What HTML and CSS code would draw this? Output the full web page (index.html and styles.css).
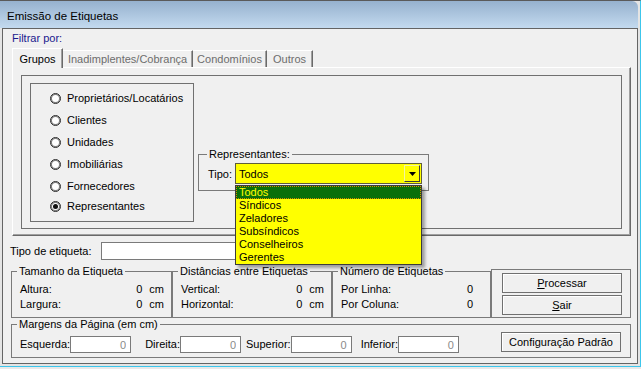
FILE: index.html
```
<!DOCTYPE html>
<html lang="pt-BR">
<head>
    <meta charset="UTF-8">
    <meta name="viewport" content="width=device-width, initial-scale=1.0">
    <title>Emissão de Etiquetas</title>
    <link rel="stylesheet" href="styles.css">
</head>
<body>
    <div class="window">
        <!-- Title Bar -->
        <div class="titlebar">Emissão de Etiquetas</div>

        <div class="client">
            <div class="filter-label">Filtrar por:</div>

            <!-- Tabs -->
            <div class="tabs">
                <div class="tab active tab-grupos">Grupos</div>
                <div class="tab tab-inad">Inadimplentes/Cobrança</div>
                <div class="tab tab-cond">Condomínios</div>
                <div class="tab tab-outros">Outros</div>
            </div>

            <div class="tab-panel">
                <div class="inner-box">
                    <div class="radio-box">
                        <label class="radio-item"><span class="radio"></span>Proprietários/Locatários</label>
                        <label class="radio-item"><span class="radio"></span>Clientes</label>
                        <label class="radio-item"><span class="radio"></span>Unidades</label>
                        <label class="radio-item"><span class="radio"></span>Imobiliárias</label>
                        <label class="radio-item"><span class="radio"></span>Fornecedores</label>
                        <label class="radio-item"><span class="radio checked"></span>Representantes</label>
                    </div>

                    <fieldset class="rep-box">
                        <legend>Representantes:</legend>
                        <div class="rep-row">
                            <span class="tipo-lbl">Tipo:</span>
                            <div class="combo">
                                <span class="combo-text">Todos</span>
                                <span class="combo-btn">
                                    <svg width="7" height="4" viewBox="0 0 7 4"><path d="M0 0H7L3.5 4Z" fill="#000"/></svg>
                                </span>
                                <ul class="combo-list">
                                    <li class="selected">Todos</li>
                                    <li>Síndicos</li>
                                    <li>Zeladores</li>
                                    <li>Subsíndicos</li>
                                    <li>Conselheiros</li>
                                    <li>Gerentes</li>
                                </ul>
                            </div>
                        </div>
                    </fieldset>
                </div>
            </div>

            <!-- Tipo de etiqueta -->
            <div class="tipo-row">
                <label>Tipo de etiqueta:</label>
                <input type="text" class="tipo-input">
            </div>

            <!-- Medidas -->
            <div class="groups-row">
                <fieldset class="group g-tam">
                    <legend>Tamanho da Etiqueta</legend>
                    <div class="g-row"><span>Altura:</span><span class="val">0</span><span class="unit">cm</span></div>
                    <div class="g-row"><span>Largura:</span><span class="val">0</span><span class="unit">cm</span></div>
                </fieldset>
                <fieldset class="group g-dist">
                    <legend>Distâncias entre Etiquetas</legend>
                    <div class="g-row"><span>Vertical:</span><span class="val">0</span><span class="unit">cm</span></div>
                    <div class="g-row"><span>Horizontal:</span><span class="val">0</span><span class="unit">cm</span></div>
                </fieldset>
                <fieldset class="group g-num">
                    <legend>Número de Etiquetas</legend>
                    <div class="g-row"><span>Por Linha:</span><span class="val">0</span></div>
                    <div class="g-row"><span>Por Coluna:</span><span class="val">0</span></div>
                </fieldset>
                <div class="btn-box">
                    <button class="btn"><u>P</u>rocessar</button>
                    <button class="btn"><u>S</u>air</button>
                </div>
            </div>

            <!-- Margens -->
            <fieldset class="margins">
                <legend>Margens da Página (em cm)</legend>
                <div class="margins-row">
                    <label>Esquerda:</label>
                    <input type="text" class="num-input" value="0">
                    <label class="lbl-direita">Direita:</label>
                    <input type="text" class="num-input" value="0">
                    <label class="lbl-superior">Superior:</label>
                    <input type="text" class="num-input" value="0">
                    <label class="lbl-inferior">Inferior:</label>
                    <input type="text" class="num-input" value="0">
                    <button class="btn btn-config">Configuração Padrão</button>
                </div>
            </fieldset>
        </div>
    </div>
</body>
</html>
```

FILE: styles.css
```
/* General */
body {
    margin: 0;
    background: #e9e9e9;
    font-family: "Liberation Sans", Arial, sans-serif;
    font-size: 11px;
    line-height: 13px;
    color: #000;
}

/* Window frame */
.window {
    width: 640px;
    height: 365px;
    border-top: 1px solid #5a5a5a;
    border-right: 1px solid #3cc6ec;
    border-bottom: 1px solid #3cc6ec;
    background: #e4e4e4;
}

.titlebar {
    width: 638px;
    height: 27px;
    box-sizing: border-box;
    padding: 8px 0 0 7px;
    font-size: 11.5px;
    line-height: 14px;
    background: linear-gradient(#96b1ce, #c3daef);
    border-top-right-radius: 6px;
}

.client {
    margin-left: 2px;
    width: 636px;
    height: 336px;
    box-sizing: border-box;
    border: 1px solid #646464;
    background: #f0f0f0;
}

.filter-label {
    margin: 3px 0 0 9px;
    color: #1a1a8e;
}

/* Tabs */
.tabs {
    display: flex;
    align-items: flex-end;
    height: 20px;
    margin: 3px 0 -1px 9px;
    position: relative;
    z-index: 1;
}

.tab {
    box-sizing: border-box;
    height: 17px;
    margin-bottom: 1px;
    padding-top: 2px;
    text-align: center;
    color: #6d6d6d;
    border-top: 1px solid #fff;
    border-right: 1px solid #6a6a6a;
    box-shadow: inset -1px 0 #a0a0a0;
    background: #f0f0f0;
}

.tab.active {
    height: 20px;
    margin-bottom: 0;
    padding-top: 4px;
    color: #000;
    border-left: 1px solid #fff;
}

.tab-grupos { width: 51px; }
.tab-inad { width: 130px; }
.tab-cond { width: 74px; }
.tab-outros { width: 46px; }

.tab-panel {
    margin-left: 9px;
    width: 619px;
    height: 169px;
    box-sizing: border-box;
    border: 1px solid;
    border-color: #fff #696969 #696969 #fff;
    box-shadow: inset -1px -1px #a0a0a0;
    padding: 7px 0 0 8px;
}

.inner-box {
    display: flex;
    align-items: flex-start;
    width: 601px;
    height: 154px;
    box-sizing: border-box;
    border: 1px solid #707070;
    padding: 7px 0 0 8px;
}

/* Radio group */
.radio-box {
    width: 164px;
    height: 139px;
    box-sizing: border-box;
    border: 1px solid #707070;
    padding: 3px 0 0 19px;
}

.radio-item {
    display: flex;
    align-items: center;
    height: 22px;
}

.radio-item:last-child {
    margin-top: -2px;
}

.radio {
    position: relative;
    width: 11px;
    height: 11px;
    box-sizing: border-box;
    margin-right: 6px;
    border: 1px solid #2a2a2a;
    border-radius: 50%;
    background: #fff;
    box-shadow: inset 0 0 0 1px #7a7a7a;
}

.radio.checked::after {
    content: "";
    position: absolute;
    left: 2px;
    top: 2px;
    width: 5px;
    height: 5px;
    border-radius: 50%;
    background: #111;
}

/* Representantes */
.rep-box {
    margin: 65px 0 0 4px;
    width: 231px;
    min-width: 0;
    box-sizing: border-box;
    padding: 2px 6px 6px 8px;
    border: 1px solid #7a7a7a;
}

legend {
    padding: 0 2px;
}

.rep-row {
    display: flex;
    align-items: center;
}

.tipo-lbl {
    width: 27px;
    padding: 1px 0 0 1px;
}

.combo {
    position: relative;
    display: flex;
    align-items: center;
    width: 187px;
    height: 21px;
    box-sizing: border-box;
    border: 1px solid #5e5e3c;
    background: #ffff00;
}

.combo-text {
    flex: 1;
    padding: 2px 0 0 3px;
}

.combo-btn {
    display: flex;
    align-items: center;
    justify-content: center;
    width: 16px;
    height: 17px;
    box-sizing: border-box;
    margin-right: 1px;
    border: 1px solid;
    border-color: #f4f4a0 #3c3c3c #3c3c3c #f4f4a0;
}

.combo-list {
    position: absolute;
    left: -1px;
    top: 100%;
    margin: 2px 0 0;
    padding: 0;
    width: 187px;
    box-sizing: border-box;
    list-style: none;
    border: 1px solid #3c3c3c;
    background: #ffff00;
    box-shadow: 3px 3px 3px rgba(0, 0, 0, 0.35);
    z-index: 5;
}

.combo-list li {
    height: 13px;
    padding-left: 3px;
}

.combo-list li.selected {
    background: #0a6f0a;
    color: #ffff00;
    outline: 1px dotted #d08a00;
    outline-offset: -1px;
}

/* Tipo de etiqueta */
.tipo-row {
    display: flex;
    align-items: center;
    height: 18px;
    margin: 6px 0 0 7px;
}

.tipo-row label {
    width: 91px;
}

.tipo-input {
    width: 300px;
    height: 18px;
    box-sizing: border-box;
    border: 1px solid #7a7a7a;
    background: #fff;
    margin: 0;
}

/* Group boxes */
.groups-row {
    display: flex;
    align-items: flex-start;
    width: 620px;
    height: 53px;
    margin: 5px 0 0 8px;
}

.group {
    margin: 0;
    min-width: 0;
    height: 53px;
    box-sizing: border-box;
    padding: 4px 7px 5px 8px;
    border: 1px solid #7a7a7a;
}

.group legend,
.margins legend {
    margin-left: -3px;
}

.g-tam { width: 161px; }
.g-dist { width: 160px; }
.g-num { width: 159px; padding-right: 17px; }

.g-row {
    display: flex;
    align-items: center;
    height: 15px;
}

.g-row .val {
    margin-left: auto;
}

.g-row .unit {
    margin-left: 7px;
}

.btn-box {
    display: flex;
    flex-direction: column;
    gap: 2px;
    width: 140px;
    height: 49px;
    margin-top: 4px;
    box-sizing: border-box;
    border: 1px solid #7a7a7a;
    padding: 3px 0 0 10px;
}

.btn {
    width: 120px;
    height: 20px;
    box-sizing: border-box;
    padding: 0;
    font: inherit;
    color: #000;
    border: 1px solid #707070;
    background: #f0f0f0;
    box-shadow: inset 1px 1px #fff;
}

/* Margens */
.margins {
    margin: 0 0 0 8px;
    width: 620px;
    min-width: 0;
    box-sizing: border-box;
    padding: 1px 9px 4px 8px;
    border: 1px solid #7a7a7a;
}

.margins-row {
    display: flex;
    align-items: flex-end;
    height: 21px;
}

.margins-row label {
    line-height: 17px;
}

.num-input {
    width: 61px;
    height: 17px;
    box-sizing: border-box;
    margin: 0;
    padding: 0 4px 0 0;
    border: 1px solid #7a7a7a;
    background: #fff;
    font: inherit;
    color: #8a8a8a;
    text-align: right;
}

.lbl-direita { margin-left: 14px; }
.lbl-superior { margin-left: 5px; }
.lbl-inferior { margin-left: 9px; }

.btn-config {
    align-self: flex-start;
    margin-left: auto;
}
```
